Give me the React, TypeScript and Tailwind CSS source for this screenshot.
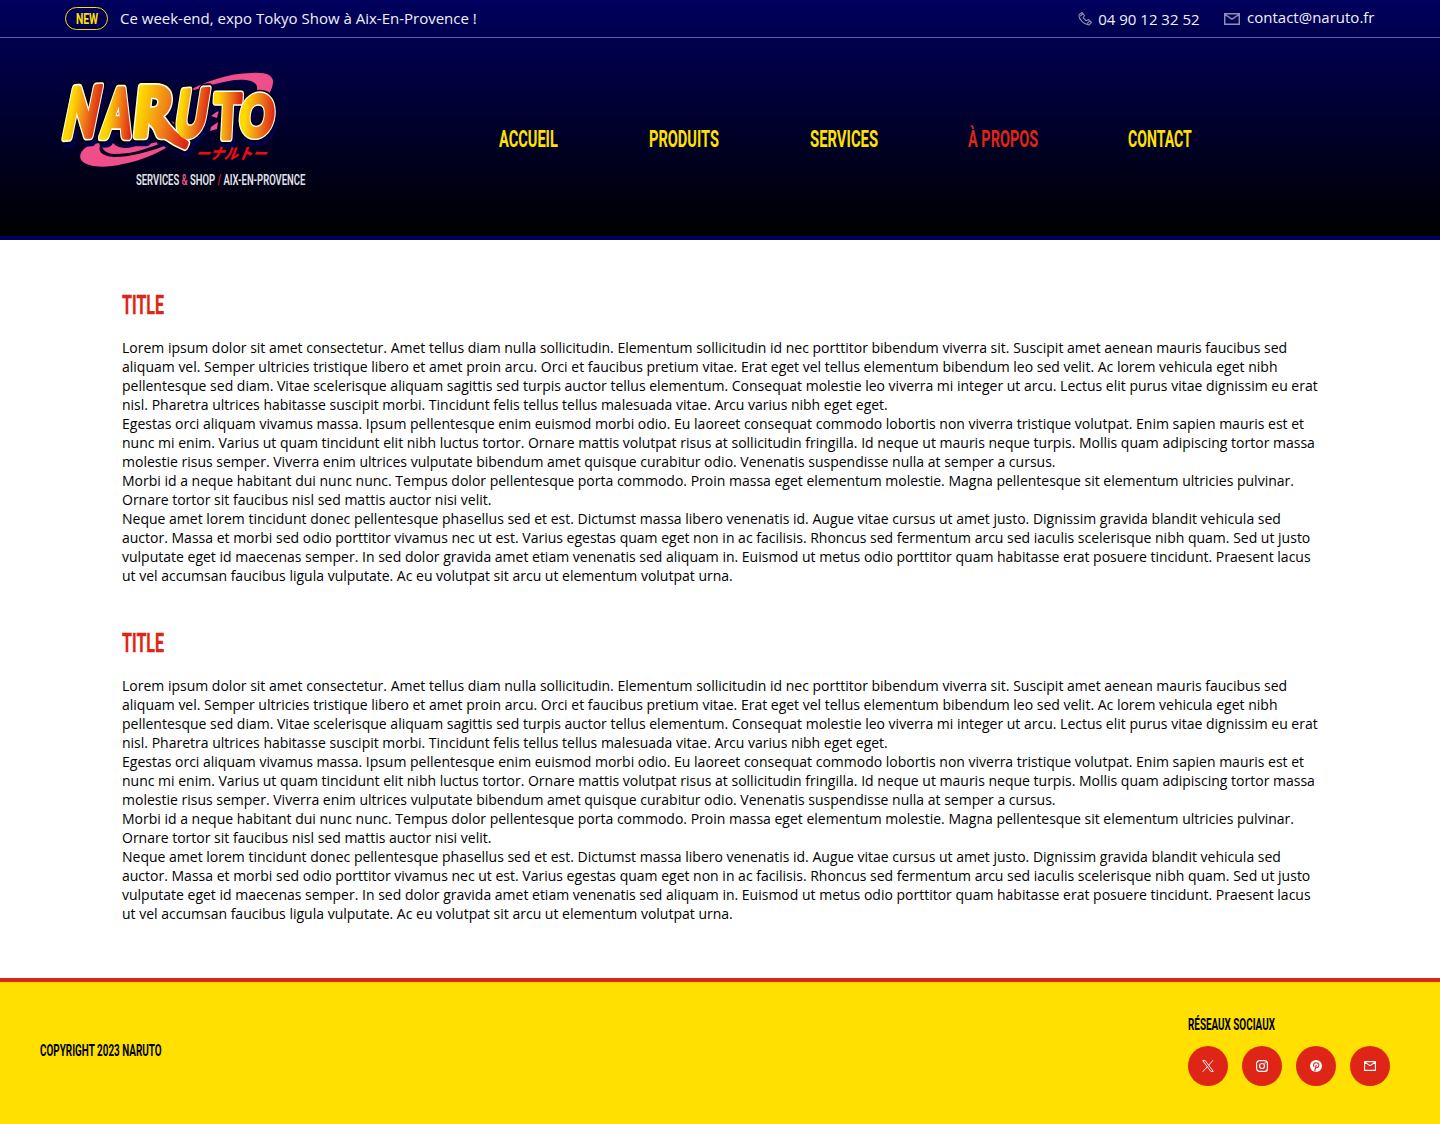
import { useLayoutEffect, useRef, useState } from 'react';

const TEXT_A = [
  'Lorem ipsum dolor sit amet consectetur. Amet tellus diam nulla sollicitudin. Elementum sollicitudin id nec porttitor bibendum viverra sit. Suscipit amet aenean mauris faucibus sed aliquam vel. Semper ultricies tristique libero et amet proin arcu. Orci et faucibus pretium vitae. Erat eget vel tellus elementum bibendum leo sed velit. Ac lorem vehicula eget nibh pellentesque sed diam. Vitae scelerisque aliquam sagittis sed turpis auctor tellus elementum. Consequat molestie leo viverra mi integer ut arcu. Lectus elit purus vitae dignissim eu erat nisl. Pharetra ultrices habitasse suscipit morbi. Tincidunt felis tellus tellus malesuada vitae. Arcu varius nibh eget eget.',
  'Egestas orci aliquam vivamus massa. Ipsum pellentesque enim euismod morbi odio. Eu laoreet consequat commodo lobortis non viverra tristique volutpat. Enim sapien mauris est et nunc mi enim. Varius ut quam tincidunt elit nibh luctus tortor. Ornare mattis volutpat risus at sollicitudin fringilla. Id neque ut mauris neque turpis. Mollis quam adipiscing tortor massa molestie risus semper. Viverra enim ultrices vulputate bibendum amet quisque curabitur odio. Venenatis suspendisse nulla at semper a cursus.',
  'Morbi id a neque habitant dui nunc nunc. Tempus dolor pellentesque porta commodo. Proin massa eget elementum molestie. Magna pellentesque sit elementum ultricies pulvinar. Ornare tortor sit faucibus nisl sed mattis auctor nisi velit.',
  'Neque amet lorem tincidunt donec pellentesque phasellus sed et est. Dictumst massa libero venenatis id. Augue vitae cursus ut amet justo. Dignissim gravida blandit vehicula sed auctor. Massa et morbi sed odio porttitor vivamus nec ut est. Varius egestas quam eget non in ac facilisis. Rhoncus sed fermentum arcu sed iaculis scelerisque nibh quam. Sed ut justo vulputate eget id maecenas semper. In sed dolor gravida amet etiam venenatis sed aliquam in. Euismod ut metus odio porttitor quam habitasse erat posuere tincidunt. Praesent lacus ut vel accumsan faucibus ligula vulputate. Ac eu volutpat sit arcu ut elementum volutpat urna.',
];

/* Condensed display text, squeezed horizontally to the given width. */
function Condensed({ width, className, children }: { width: number; className?: string; children: React.ReactNode }) {
  const ref = useRef<HTMLSpanElement>(null);
  const [scale, setScale] = useState(0.7);
  useLayoutEffect(() => {
    if (ref.current) setScale(width / ref.current.offsetWidth);
  }, [width]);
  return (
    <span className={`block font-[Roboto,sans-serif] whitespace-nowrap ${className ?? ''}`} style={{ width }}>
      <span ref={ref} className="inline-block origin-left" style={{ transform: `scaleX(${scale})` }}>
        {children}
      </span>
    </span>
  );
}

const LETTERS = [
  { c: 'N', m: 'matrix(0.43 -0.03 -0.14 0.68 61 138)' },
  { c: 'A', m: 'matrix(0.4 0 -0.08 0.66 101 137)' },
  { c: 'U', m: 'matrix(0.42 -0.03 -0.1 0.63 173 137)' },
  { c: 'T', m: 'matrix(0.44 0 -0.03 0.6 213 138)' },
  { c: 'O', m: 'matrix(0.42 0 -0.06 0.56 238 136)' },
];

function Wordmark({ className, rClassName }: { className: string; rClassName?: string }) {
  return (
    <g className={className} fontFamily="Lato, sans-serif" fontWeight={900} fontSize={100} strokeLinejoin="round">
      <g transform="matrix(0.57 0 -0.07 0.67 132 136)" className={rClassName}>
        <text>R</text>
        <path d="M28 -23 L52 -23 Q70 -3 97 11 L95 16 Q60 5 28 -23 Z" />
      </g>
      {LETTERS.map((l) => (
        <text key={l.c} transform={l.m}>{l.c}</text>
      ))}
    </g>
  );
}

function Logo() {
  return (
    <svg width="230" height="105" viewBox="55 67 230 105" className="block">
      <defs>
        <linearGradient id="fire" x1="0" x2="1" y1="0.1" y2="0">
          <stop offset="0.1" stopColor="#ffd800" />
          <stop offset="0.5" stopColor="#f08518" />
          <stop offset="0.95" stopColor="#dd2615" />
        </linearGradient>
        <linearGradient id="fireR" gradientUnits="userSpaceOnUse" x1="5" x2="97" y1="-30" y2="-20">
          <stop offset="0" stopColor="#ffd800" />
          <stop offset="0.5" stopColor="#f08518" />
          <stop offset="1" stopColor="#dd2615" />
        </linearGradient>
      </defs>
      <g fill="#f04e8b">
        <path d="M184 93 C204 82 228 73 252 73 C267 72 274 76 273 83 Q272 90 267 97 L256 94 Q260 84 251 81 C233 76 207 87 184 93Z" />
        <path d="M101 143 C83 144 77 155 82 161 C89 168 106 168 123 164 C143 160 155 154 166 148 L164 146 C149 152 130 157 114 157 C101 156 97 151 101 143Z" />
        <path d="M102 147 Q110 149 113 143 Q119 150 132 147 L158 142 L159 144 C143 150 132 154 114 154 Q105 154 102 147Z" />
        <path d="M162 122 Q170 119 175 123 L173 126 L165 125Z M211 116 L219 110 L217 118Z M211 127 L218 122 L217 129 L210 131Z" />
      </g>
      <g transform="translate(2 5)"><Wordmark className="fill-[#00004f] stroke-[#00004f] [stroke-width:16px]" /></g>
      <Wordmark className="fill-black stroke-black [stroke-width:19px]" />
      <Wordmark className="fill-white stroke-white [stroke-width:13px]" />
      <Wordmark className="fill-[url(#fire)] stroke-[url(#fire)] [stroke-width:8px]" rClassName="fill-[url(#fireR)] stroke-[url(#fireR)]" />
      <text transform="matrix(1 0 -0.4 1 195 159)" fontFamily="Noto Sans CJK JP, sans-serif" fontWeight={900} fontSize="15" textLength="71" lengthAdjust="spacingAndGlyphs" fill="#f00b12">ーナルトー</text>
    </svg>
  );
}

function Phone() {
  return (
    <svg width="14" height="14" viewBox="0 0 24 24" fill="none" stroke="#8f8fb4" strokeWidth="1.9" strokeLinejoin="round">
      <path d="M5 2 2 5c-2 6 9 18 17 17l4-4-5-5-4 2-5-5 2-4-4-5Z M4 7l4-4 M16 20l4-5" />
    </svg>
  );
}

function Mail() {
  return (
    <svg width="16" height="12" viewBox="0 0 16 12" fill="none" stroke="#8f8fb4" strokeWidth="1.5">
      <path d="M.7.7h14.6v10.6H.7ZM1 1.5l7 4.7 7-4.7" />
    </svg>
  );
}

const NAV = [
  { label: 'ACCUEIL', width: 59, cls: 'mr-[91px] text-[#ffe000]' },
  { label: 'PRODUITS', width: 70, cls: 'mr-[91px] text-[#ffe000]' },
  { label: 'SERVICES', width: 68, cls: 'mr-[90px] text-[#ffe000]' },
  { label: 'À PROPOS', width: 70, cls: 'mr-[90px] text-[#de2516]' },
  { label: 'CONTACT', width: 64, cls: 'text-[#ffe000]' },
];

const SOCIAL = [
  <svg key="x" width="12" height="12" viewBox="0 0 12 12" fill="none" stroke="white" strokeWidth="0.9">
    <path d="M.7.6h2.5l8.1 10.8H8.8ZM11 .3 6.7 5.2M5.2 6.8.7 11.8" />
  </svg>,
  <svg key="i" width="12" height="12" viewBox="0 0 12 12" fill="none" stroke="white" strokeWidth="1.2">
    <rect x=".6" y=".6" width="10.8" height="10.8" rx="3" />
    <circle cx="6" cy="6" r="2.5" />
    <circle cx="9.1" cy="2.9" r=".7" fill="white" stroke="none" />
  </svg>,
  <svg key="p" width="12" height="12" viewBox="0 0 12 12" fill="none">
    <circle cx="6" cy="6" r="6" fill="white" />
    <path d="M4 6.8C2.7 4.5 4.2 2.7 6.2 2.7c2 0 3 1.4 2.5 3.1-.5 2-2.5 2.5-3 1.2M6.2 5 4.7 11.3" stroke="#de2516" strokeWidth="1.1" />
  </svg>,
  <svg key="m" width="12" height="10" viewBox="0 0 12 10" fill="none" stroke="white" strokeWidth="1.1">
    <path d="M.6.6h10.8v8.8H.6ZM.8 1.3 6 4.7l5.2-3.4" />
  </svg>,
];

function Section({ className }: { className: string }) {
  return (
    <section className={className}>
      <h2 className="text-[26px] leading-8 font-bold text-[#de2516] [-webkit-text-stroke:0.3px_currentColor]">
        <Condensed width={42}>TITLE</Condensed>
      </h2>
      <div className="mt-[17px] text-sm leading-[19px] text-black">
        {TEXT_A.map((p) => (
          <p key={p.slice(0, 5)}>{p}</p>
        ))}
      </div>
    </section>
  );
}

export default function App() {
  return (
    <div className="flex h-[1124px] w-[1440px] flex-col bg-white font-['Open_Sans',sans-serif]">
      <header className="h-60 border-b-4 border-[#00005e] bg-linear-to-b/srgb from-[#00005e] to-black">
        <div className="flex h-[38px] items-center border-b border-[#6060a0] pl-[65px] text-[15px] text-[#f0f0f8]">
          <div className="flex h-[23px] w-[43px] items-center justify-center rounded-full border border-[#ffe000] text-[15px] leading-5 font-bold text-[#ffe000]">
            <Condensed width={22}>NEW</Condensed>
          </div>
          <span className="ml-3">Ce week-end, expo Tokyo Show à Aix-En-Provence !</span>
          <div className="mr-[65.5px] ml-auto flex items-center">
            <Phone />
            <span className="mt-[2px] ml-[6px]">04 90 12 32 52</span>
            <span className="ml-[24.5px]"><Mail /></span>
            <span className="ml-[7px] -mt-[2px]">contact@naruto.fr</span>
          </div>
        </div>
        <div className="flex pl-[55px]">
          <div className="w-[444px] pt-[29px]">
            <Logo />
            <div className="-mt-[1px] ml-[81px] text-[14px] leading-[18px] font-semibold text-[#e4e4ec]">
              <Condensed width={169}>
                SERVICES <span className="text-[#f04e8b]">&amp;</span> SHOP <span className="text-[#e01b1b]">/</span> AIX-EN-PROVENCE
              </Condensed>
            </div>
          </div>
          <nav className="flex pt-[85px] text-2xl leading-8 font-bold">
            {NAV.map((n) => (
              <a key={n.label} className={n.cls}>
                <Condensed width={n.width}>{n.label}</Condensed>
              </a>
            ))}
          </nav>
        </div>
      </header>
      <main className="h-[738px] pt-[49px] pl-[122px]">
        <Section className="w-[1200px]" />
        <Section className="mt-[42px] w-[1200px]" />
      </main>
      <footer className="flex flex-1 justify-between border-t-4 border-[#de2516] bg-[#ffe000] pr-[50px] pl-10 text-black">
        <div className="pt-[59px] text-base leading-5 font-bold">
          <Condensed width={122}>COPYRIGHT 2023 NARUTO</Condensed>
        </div>
        <div className="pt-[33px]">
          <div className="text-base leading-5 font-bold">
            <Condensed width={87}>RÉSEAUX SOCIAUX</Condensed>
          </div>
          <div className="mt-[11px] flex gap-[14px]">
            {SOCIAL.map((icon) => (
              <a key={icon.key} className="flex size-10 items-center justify-center rounded-full bg-[#de2516]">{icon}</a>
            ))}
          </div>
        </div>
      </footer>
    </div>
  );
}
